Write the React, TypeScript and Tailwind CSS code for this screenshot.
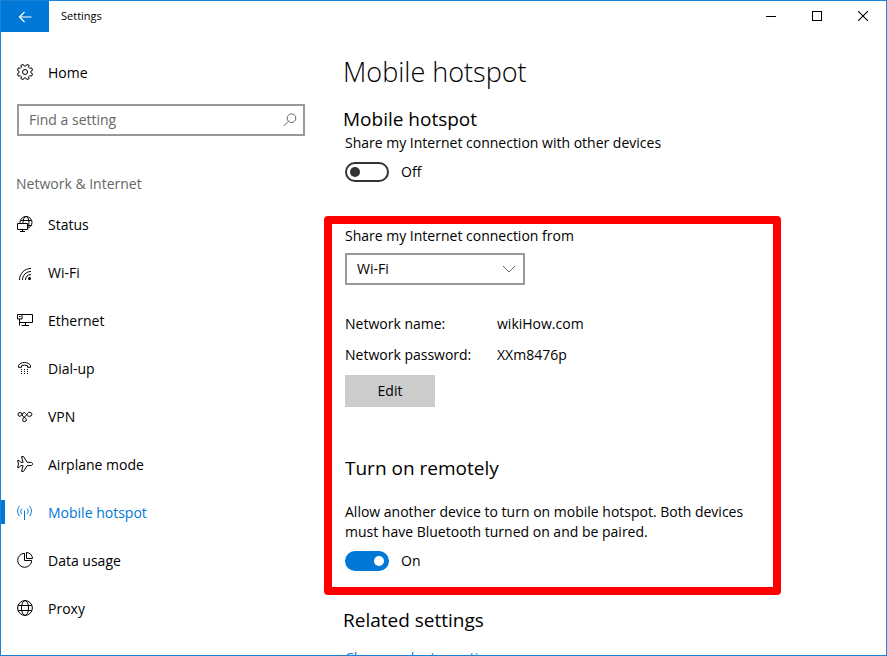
import { useState } from "react";
import type { ReactNode } from "react";

type NavItem = { key: string; label: string; icon: ReactNode };

// Eight-toothed cog outline on a 16x16 grid
const gearPath = (() => {
  const points: string[] = [];
  const add = (deg: number, r: number) => {
    const a = (deg * Math.PI) / 180;
    points.push(`${(8 + r * Math.cos(a)).toFixed(2)} ${(8 + r * Math.sin(a)).toFixed(2)}`);
  };
  for (let i = 0; i < 8; i++) {
    const c = i * 45 + 22.5;
    add(c - 15, 6);
    add(c - 9, 7.8);
    add(c + 9, 7.8);
    add(c + 15, 6);
  }
  return `M${points.join("L")}Z`;
})();

function Icon({ children }: { children: ReactNode }) {
  return (
    <svg
      viewBox="0 0 16 16"
      fill="none"
      stroke="currentColor"
      className="w-4 h-4 shrink-0 overflow-visible"
      aria-hidden="true"
    >
      {children}
    </svg>
  );
}

const navItems: NavItem[] = [
  {
    key: "status",
    label: "Status",
    icon: (
      <Icon>
        <circle cx="9" cy="6.500" r="6" />
        <ellipse cx="9" cy="6.500" rx="3" ry="6" />
        <path d="M3.500 4.500h11M3.500 9.500h11" />
        <path d="M.5 7.500h10v6H.5z" fill="white" />
        <path d="M5.500 13.500v2M3 15.500h5" />
      </Icon>
    ),
  },
  {
    key: "wifi",
    label: "Wi-Fi",
    icon: (
      <Icon>
        <path d="M2.500 16C2.500 9.500 7.500 4.500 14 4.500M5.500 16c0-4.800 3.700-8.500 8.500-8.500M8.500 16c0-3.200 2.300-5.500 5.500-5.500" />
        <circle cx="12.500" cy="14.500" r="1.500" fill="currentColor" stroke="none" />
      </Icon>
    ),
  },
  {
    key: "ethernet",
    label: "Ethernet",
    icon: (
      <Icon>
        <path d="M5 2.500h10.500v8H4M.5 2.500H5v4.500H.5zM2.500 7v3.500h2M2.500 10v3.500M8.500 10.500v3M4.500 13.500h7.500" />
        <path d="M2 4.500h1.500" />
      </Icon>
    ),
  },
  {
    key: "dialup",
    label: "Dial-up",
    icon: (
      <Icon>
        <path d="M1.500 7.300V5.500C2.500 3.500 4.800 2.500 7.500 2.500s5 1 6 3v1.800h-3V5.700c-1.800-.7-4.200-.7-6 0v1.600z" />
        <path d="M4 9.500h1M7 9.500h1M10 9.500h1M4 11.500h1M7 11.500h1M10 11.500h1M4 13.500h1M7 13.500h1M10 13.500h1" />
      </Icon>
    ),
  },
  {
    key: "vpn",
    label: "VPN",
    icon: (
      <Icon>
        <path d="M5 6.400a2 1.900 0 1 0-2.200 1.900C5 8.200 5.200 4.500 7.200 4.500c2.100 0 1.600 3.800 5.400 3.800a2.200 2 0 1 0-2-2.700C9.700 8.300 5.600 9 5.600 11.700a1.900 1.900 0 0 0 3.800 0C9.400 9.300 5.300 9.600 5 6.400z" />
      </Icon>
    ),
  },
  {
    key: "airplane",
    label: "Airplane mode",
    icon: (
      <Icon>
        <path d="M4.500.6h2l3.700 5.700h3.600c2.300 0 2.300 3.300 0 3.300h-3.600l-3.700 5.800h-2l1.600-5.800H3.700L2.200 11.500H.6L1.500 8 .6 4.500h1.600l1.500 1.800h2.400z" />
      </Icon>
    ),
  },
  {
    key: "hotspot",
    label: "Mobile hotspot",
    icon: (
      <Icon>
        <path d="M7.500 6.500V16" />
        <path d="M4.900 9.900c-1.500-1.500-1.500-3.900 0-5.400M10.100 9.900c1.500-1.500 1.500-3.900 0-5.400M2.600 12.200c-2.700-2.800-2.700-7.300 0-10.100M12.400 12.200c2.700-2.800 2.700-7.300 0-10.100" />
      </Icon>
    ),
  },
  {
    key: "data",
    label: "Data usage",
    icon: (
      <Icon>
        <path d="M7.500 1.300A7 7 0 1 0 14.700 8.500H7.500z" />
        <path d="M9.500.5v6h6A6 6 0 0 0 9.500.5z" />
      </Icon>
    ),
  },
  {
    key: "proxy",
    label: "Proxy",
    icon: (
      <Icon>
        <circle cx="8" cy="8" r="7.400" />
        <ellipse cx="8" cy="8" rx="3.500" ry="7.400" />
        <path d="M1.200 5.500h13.600M1.200 10.500h13.600" />
      </Icon>
    ),
  },
];

function Toggle({ id, on, name, onChange }: { id: string; on: boolean; name: string; onChange: (v: boolean) => void }) {
  return (
    <div className="flex items-center gap-3">
      <input
        id={id}
        type="checkbox"
        role="switch"
        aria-label={name}
        checked={on}
        onChange={(e) => onChange(e.target.checked)}
        className="appearance-none flex items-center w-11 h-5 px-[3px] rounded-full border-2 border-[#333] before:block before:w-2.5 before:h-2.5 before:rounded-full before:bg-[#333] checked:justify-end checked:bg-[#0078d7] checked:border-[#0078d7] checked:before:bg-white"
      />
      <label htmlFor={id}>{on ? "On" : "Off"}</label>
    </div>
  );
}

export default function App() {
  const [active, setActive] = useState("hotspot");
  const [sharing, setSharing] = useState(false);
  const [remote, setRemote] = useState(true);

  return (
    <div className="h-screen flex flex-col overflow-hidden bg-white text-black border border-[#1883d7] font-['Open_Sans','Noto_Sans',sans-serif] text-sm leading-5">
      {/* Title bar */}
      <header className="flex items-stretch h-[31px] shrink-0">
        <button aria-label="Back" className="w-12 flex items-center justify-center bg-[#0078d7] text-white">
          <svg viewBox="0 0 14 12" fill="none" stroke="currentColor" strokeWidth="1.200" className="w-3.5 h-3">
            <path d="M1.500 6h12M6.500 1l-5 5 5 5" />
          </svg>
        </button>
        <h1 className="flex-1 self-center pl-3 pb-0.5 text-[11px]">Settings</h1>
        <button aria-label="Minimize" className="w-[46px] pb-px flex items-center justify-center">
          <svg viewBox="0 0 10 10" className="w-2.5 h-2.5" shapeRendering="crispEdges">
            <path d="M0 5h10v1H0z" />
          </svg>
        </button>
        <button aria-label="Maximize" className="w-[46px] pb-px flex items-center justify-center">
          <svg viewBox="0 0 10 10" fill="none" stroke="currentColor" className="w-2.5 h-2.5" shapeRendering="crispEdges">
            <path d="M.5.5h9v9h-9z" />
          </svg>
        </button>
        <button aria-label="Close" className="w-[46px] pb-px flex items-center justify-center">
          <svg viewBox="0 0 10 10" fill="none" stroke="currentColor" strokeWidth="1.100" className="w-2.5 h-2.5">
            <path d="M0 0l10 10M10 0L0 10" />
          </svg>
        </button>
      </header>

      <div className="flex flex-1 min-h-0">
        {/* Sidebar */}
        <aside className="w-[304px] shrink-0 pt-4">
          <a href="#home" className="flex items-center h-12 pl-4">
            <Icon>
              <path d={gearPath} />
              <circle cx="8" cy="8" r="2.500" />
            </Icon>
            <span className="ml-[15px] pt-0.5">Home</span>
          </a>

          <div className="relative mt-2 ml-4">
            <input
              type="search"
              aria-label="Find a setting"
              placeholder="Find a setting"
              className="block w-full h-8 pl-2.5 pr-8 pb-0.5 border-2 border-[#999] placeholder:text-[#666] outline-none"
            />
            <svg
              viewBox="0 0 14 14"
              fill="none"
              stroke="#666"
              className="absolute right-2 top-[9px] w-3.5 h-3.5"
              aria-hidden="true"
            >
              <circle cx="8.500" cy="5.200" r="4.300" />
              <path d="M5.400 8.300L.8 12.900" />
            </svg>
          </div>

          <h2 className="mt-8 pl-[15px] leading-8 text-[#666]">Network &amp; Internet</h2>

          <nav>
            {navItems.map((item) => (
              <a
                key={item.key}
                href={`#${item.key}`}
                onClick={() => setActive(item.key)}
                className={`flex items-center h-12 ${active === item.key ? "text-[#0078d7]" : ""}`}
              >
                <span className={`w-1 h-6 mr-3 ${active === item.key ? "bg-[#0078d7]" : ""}`} />
                {item.icon}
                <span className="ml-[15px] pt-0.5">{item.label}</span>
              </a>
            ))}
          </nav>
        </aside>

        {/* Page */}
        <main className="flex-1 min-w-0 pl-[19px] pt-[22px] overflow-y-auto [scrollbar-width:none]">
          <section className="px-[21px]">
            <h2 className="-ml-0.5 text-[27px] leading-9 font-light">Mobile hotspot</h2>
            <h3 className="-ml-0.5 mt-4 text-[19px] leading-[27px]">Mobile hotspot</h3>
            <p className="mb-[9px]">Share my Internet connection with other devices</p>
            <Toggle id="sharing" name="Mobile hotspot" on={sharing} onChange={setSharing} />
          </section>

          <section className="mt-[34px] w-full max-w-[457px] px-[13px] pt-0.5 pb-4 border-8 border-[#ff0000] rounded-[4px]">
            <label htmlFor="source">Share my Internet connection from</label>
            <div className="relative mt-[7px] w-[180px]">
              <select id="source" className="block appearance-none w-full h-8 pl-2.5 border-2 border-[#999] bg-white">
                <option>Wi-Fi</option>
              </select>
              <svg
                viewBox="0 0 14 8"
                fill="none"
                stroke="#666"
                className="absolute right-[9px] top-3 w-3.5 h-2 pointer-events-none"
                aria-hidden="true"
              >
                <path d="M1 1l6 6 6-6" />
              </svg>
            </div>

            <dl className="mt-[29px] grid grid-cols-[152px_1fr] gap-y-[11px]">
              <dt>Network name:</dt>
              <dd>wikiHow.com</dd>
              <dt>Network password:</dt>
              <dd>XXm8476p</dd>
            </dl>
            <button className="block mt-2.5 w-[90px] h-8 bg-[#ccc]">Edit</button>

            <h3 className="mt-12 text-[19px] leading-[27px]">Turn on remotely</h3>
            <p className="mt-5 mb-[9px]">
              Allow another device to turn on mobile hotspot. Both devices must have Bluetooth turned on and be paired.
            </p>
            <Toggle id="remote" name="Turn on remotely" on={remote} onChange={setRemote} />
          </section>

          <section className="mt-3 px-[21px]">
            <h3 className="-ml-0.5 text-[19px] leading-[27px]">Related settings</h3>
            <a href="#adapter" className="block mt-3.5 text-[#0078d7]">
              Change adapter options
            </a>
          </section>
        </main>
      </div>
    </div>
  );
}
